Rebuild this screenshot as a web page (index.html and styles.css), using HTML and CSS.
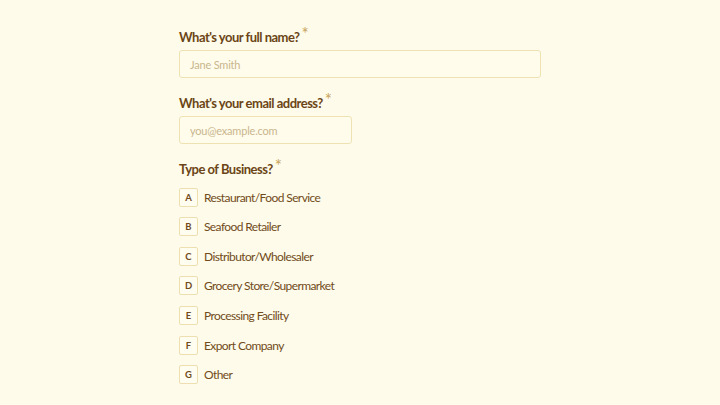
FILE: index.html
```html
<!DOCTYPE html>
<html lang="en">
<head>
    <meta charset="UTF-8">
    <meta name="viewport" content="width=device-width, initial-scale=1.0">
    <title>Business Inquiry</title>
    <link rel="stylesheet" href="styles.css">
</head>
<body>
    <form class="form">
        <div class="field">
            <label class="label" for="name">What's your full name?<span class="req">*</span></label>
            <input class="input" id="name" type="text" placeholder="Jane Smith">
        </div>
        <div class="field">
            <label class="label" for="email">What's your email address?<span class="req">*</span></label>
            <input class="input short" id="email" type="email" placeholder="you@example.com">
        </div>
        <div class="field">
            <div class="label">Type of Business?<span class="req">*</span></div>
            <div class="options">
                <div class="option"><span class="letter">A</span>Restaurant/Food Service</div>
                <div class="option"><span class="letter">B</span>Seafood Retailer</div>
                <div class="option"><span class="letter">C</span>Distributor/Wholesaler</div>
                <div class="option"><span class="letter">D</span>Grocery Store/Supermarket</div>
                <div class="option"><span class="letter">E</span>Processing Facility</div>
                <div class="option"><span class="letter">F</span>Export Company</div>
                <div class="option"><span class="letter">G</span>Other</div>
            </div>
        </div>
    </form>
</body>
</html>
```

FILE: styles.css
```css
body {
    margin: 0;
    background-color: #fefbea;
    color: #6b4516;
    font-family: Lato, "Open Sans", sans-serif;
}
.form {
    width: 362px;
    margin-left: 179px;
    padding-top: 27px;
    display: flex;
    flex-direction: column;
    gap: 15px;
}
.field {
    display: flex;
    flex-direction: column;
}
.label {
    height: 20px;
    font-size: 13px;
    line-height: 20px;
    font-weight: 700;
    letter-spacing: -0.5px;
    margin-bottom: 3px;
}
.req {
    color: #c8a35c;
    font-weight: 400;
    font-size: 17px;
    line-height: 0;
    margin-left: 2px;
    position: relative;
    top: -2px;
}
.input {
    box-sizing: border-box;
    width: 362px;
    height: 28px;
    border: 1px solid #eee2b2;
    border-radius: 3px;
    background-color: #fffcec;
    padding: 0 10px;
    font-family: inherit;
    font-size: 11px;
    letter-spacing: -0.2px;
    color: #6b4516;
    outline: none;
}
.input::placeholder {
    color: #c9b68c;
}
.input.short {
    width: 173px;
}
.options {
    display: flex;
    flex-direction: column;
    gap: 9.67px;
    margin-top: 5px;
}
.option {
    display: flex;
    align-items: center;
    height: 20px;
    font-size: 12px;
    letter-spacing: -0.6px;
    color: #714b1b;
    cursor: pointer;
}
.letter {
    box-sizing: border-box;
    width: 19px;
    height: 19px;
    border: 1px solid #eddfb0;
    border-radius: 2px;
    background-color: #fffdf0;
    display: flex;
    justify-content: center;
    align-items: center;
    font-size: 9.5px;
    font-weight: 700;
    letter-spacing: 0;
    margin-right: 6px;
}
```
